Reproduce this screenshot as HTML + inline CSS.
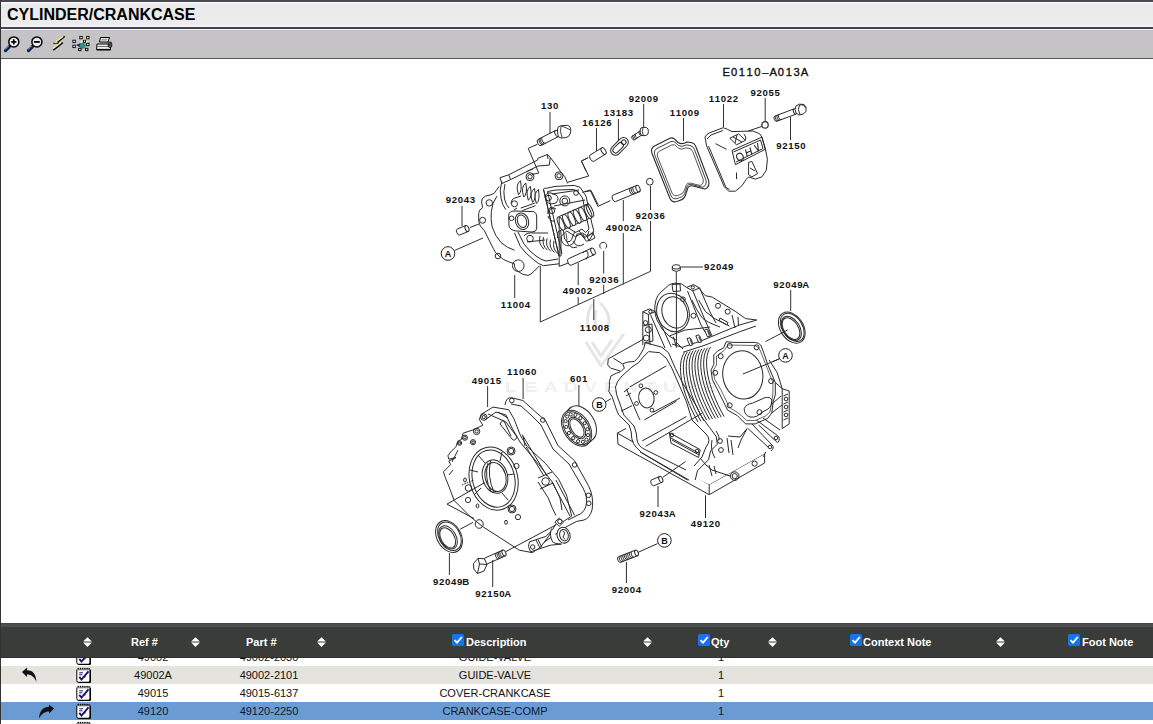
<!DOCTYPE html>
<html><head><meta charset="utf-8">
<style>
*{margin:0;padding:0;box-sizing:border-box}
html,body{width:1153px;height:724px;overflow:hidden;background:#fff;font-family:"Liberation Sans",sans-serif}
#top{position:absolute;left:0;top:0;width:1153px;height:2px;background:#4a4a56}
#lb{position:absolute;left:0;top:0;width:1px;height:724px;background:#333;z-index:5}
#title{position:absolute;left:1px;top:2px;width:1152px;height:25px;background:linear-gradient(#fafafd 0,#fafafd 1px,#ebebeb 2px,#ececee 23px,#f8f8fa 24px)}
#title span{position:absolute;left:6px;top:4px;font-weight:bold;font-size:16px;color:#000;letter-spacing:0}
#l1{position:absolute;left:0;top:27px;width:1153px;height:2px;background:#454550}#l1b{position:absolute;left:1px;top:29px;width:1152px;height:1px;background:#f2f2f6}
#tb{position:absolute;left:1px;top:30px;width:1152px;height:28px;background:#c5c3c5}
#l2{position:absolute;left:0;top:58px;width:1153px;height:1px;background:#555}
#diag{position:absolute;left:0;top:59px;width:1153px;height:564px}
#hdr{position:absolute;left:0;top:623px;width:1153px;height:35px;background:#3a3c39;border-bottom:1px solid #2f302e}
#hdr .tl{position:absolute;left:0;top:0;width:1153px;height:1px;background:#444}
#hdr .tl2{position:absolute;left:0;top:1px;width:1153px;height:3px;background:#4e4e50}
.h{position:absolute;top:12px;color:#fff;font-weight:bold;font-size:11px;line-height:14px;white-space:nowrap}
.sa{position:absolute;top:14.3px;width:9px;height:10px}
.cb{position:absolute;top:11px;width:12px;height:12px;background:#1a73e8;border-radius:2px}
.row{position:absolute;left:1px;width:1152px;height:18px;font-size:11px;color:#111;line-height:18px}
.row span{position:absolute;top:0;white-space:nowrap}
.c1{left:0;width:305px;text-align:center}

.ni{position:absolute;left:74.5px;top:1px;width:15px;height:16px}
.rf{left:52px;width:200px;text-align:center}
.pt{left:168px;width:200px;text-align:center}
.ds{left:394px;width:200px;text-align:center}
.qt{left:620px;width:200px;text-align:center}
</style></head><body>
<div id="top"></div>
<div id="title"><span>CYLINDER/CRANKCASE</span></div>
<div id="lb"></div>
<div id="l1"></div><div id="l1b"></div>
<div id="tb"><svg width="1152" height="29" style="position:absolute;left:0;top:0">
<defs>
<linearGradient id="hg" x1="0" y1="0" x2="1" y2="1"><stop offset="0" stop-color="#a8c4e8"/><stop offset="1" stop-color="#0d2350"/></linearGradient>
</defs>
<g transform="translate(-1,-30)">
<!-- zoom in -->
<line x1="9.5" y1="46.5" x2="5.5" y2="50.5" stroke="#0f2452" stroke-width="3.2" stroke-linecap="round"/>
<line x1="8.5" y1="46" x2="5" y2="49.5" stroke="#9fbde6" stroke-width="1"/>
<circle cx="13.8" cy="41.9" r="5" fill="#f4f4f6" stroke="#000" stroke-width="1.5"/>
<path d="M11.2 41.9h5.2M13.8 39.3v5.2" stroke="#000" stroke-width="1.8"/>
<!-- zoom out -->
<line x1="32.5" y1="46.5" x2="28.5" y2="50.5" stroke="#0f2452" stroke-width="3.2" stroke-linecap="round"/>
<line x1="31.5" y1="46" x2="28" y2="49.5" stroke="#9fbde6" stroke-width="1"/>
<circle cx="36.9" cy="41.9" r="5" fill="#ececf0" stroke="#000" stroke-width="1.5"/>
<path d="M34 41.9h5.8" stroke="#000" stroke-width="1.8"/>
<!-- lightning -->
<path d="M57.5 42 L64.7 36.3" stroke="#000" stroke-width="1.6"/>
<path d="M56.3 41.5 L63 36.5" stroke="#f7f48c" stroke-width="1.4"/>
<path d="M53.3 43.3 L58.5 43.3 L57.5 42" stroke="#000" stroke-width="1.1" fill="none"/><path d="M54.5 42.6 L57.5 42.6" stroke="#f7f48c" stroke-width="0.8"/>
<path d="M53.3 50.2 L62.8 42.7" stroke="#000" stroke-width="1.6"/>
<path d="M53 48.5 L61 42.5" stroke="#f7f48c" stroke-width="1.3"/>
<!-- select -->
<path d="M81 43 Q84 36.5 87 43" fill="none" stroke="#f2ecb8" stroke-width="2"/>
<path d="M76 45 L81 43 L80.5 47.5 Z" fill="#1a2a5a"/>
<circle cx="82.7" cy="45.8" r="3" fill="#2f8f8a"/>
<g fill="#fff" stroke="#000" stroke-width="0.9">
<rect x="79.8" y="36.4" width="2.4" height="2.4"/><rect x="86.6" y="36.4" width="2.4" height="2.4"/>
<rect x="72.9" y="40.2" width="2.4" height="2.4"/><rect x="72.9" y="45.2" width="2.4" height="2.4"/>
<rect x="78.6" y="48.3" width="2.4" height="2.4"/><rect x="85.5" y="48.3" width="2.4" height="2.4"/>
<rect x="86.6" y="43.3" width="2.4" height="2.4"/><rect x="83.3" y="40.2" width="2.2" height="2.2"/>
</g>
<!-- printer -->
<path d="M99.5 42 L100.5 37.5 L109.5 37.5 L108 42 Z" fill="#f6f6f6" stroke="#000" stroke-width="1"/>
<path d="M101.5 39.3h6M101 41h6" stroke="#777" stroke-width="0.8"/>
<path d="M97 44 L109 44 L110.5 46 L110.5 49.8 L96.6 49.8 Z" fill="#ededed" stroke="#000" stroke-width="1"/>
<path d="M97 49.6h13.5" stroke="#000" stroke-width="1.4"/>
<path d="M97.5 46.5h11" stroke="#555" stroke-width="0.8"/>
<ellipse cx="110" cy="44.8" rx="2" ry="3" fill="#4a4a4a" stroke="#000" stroke-width="0.6"/>
</g></svg></div>
<div id="l2"></div>
<svg id="dg" width="1153" height="724" style="position:absolute;left:0;top:0">
<g fill="#fff" stroke="#222" stroke-width="1">
<circle cx="448" cy="253.5" r="6.8"/>
<circle cx="785.5" cy="355.4" r="6.8"/>
<circle cx="599.2" cy="404.5" r="6.8"/>
<circle cx="664.4" cy="540.4" r="6.8"/>
</g>
<g font-family="Liberation Sans" font-weight="bold" font-size="9" fill="#111" text-anchor="middle">
<text x="448" y="256.8">A</text>
<text x="785.5" y="358.7">A</text>
<text x="599.4" y="407.8">B</text>
<text x="664.6" y="543.7">B</text>
</g>

<!-- leader lines -->
<g fill="none" stroke="#333" stroke-width="1">
<path d="M550 112V134"/>
<path d="M596.5 128V151"/>
<path d="M618.4 119V141"/>
<path d="M643.7 104V128"/>
<path d="M683.5 118V141"/>
<path d="M723.5 104V127"/>
<path d="M765.2 98V121"/>
<path d="M790.5 117V140"/>
<path d="M462 206V226"/>
<path d="M454.5 250.5L483 238"/>
<path d="M514.7 275V298"/>
<path d="M623.3 200V221M623.3 233V284.5"/>
<path d="M650.5 186V210M650.5 221V271"/>
<path d="M603.7 251V273.6M603.7 285V294"/>
<path d="M578.2 263V285M578.2 297V304"/>
<path d="M540.3 266V322L650.8 271.2"/>
<path d="M593.8 299V320"/>
<path d="M681 267H703"/>
<path d="M676.3 272V346"/>
<path d="M790.7 290V311"/>
<path d="M787.8 329.8L765.5 341.6"/>
<path d="M779 359L743 374"/>
<path d="M523.1 378V399"/>
<path d="M487.6 386V407"/>
<path d="M578.9 385V408"/>
<path d="M449.4 553V575"/>
<path d="M492.7 560V587"/>
<path d="M605.5 402L611 398.7"/>
</g>
<g fill="none" stroke="#2a2a2a" stroke-width="1" stroke-linejoin="round">
<g ><path d="M541.1 145.5 L558.6 136.5 M537.9 139.5 L555.4 130.5"/><ellipse cx="557.0" cy="133.5" rx="3.4" ry="1.9" transform="rotate(62.8 557.0 133.5)"/><path d="M541.1 145.5 A3.4 1.9 62.8 0 1 537.9 139.5"/></g>
<path d="M542.6 144.7 A3.4 1.9 62.8 0 1 539.5 138.7"/><path d="M544.1 144.0 A3.4 1.9 62.8 0 1 541.0 137.9"/><path d="M545.6 143.2 A3.4 1.9 62.8 0 1 542.5 137.1"/>
<path d="M557.5 130 Q557 126.5 560.5 125.8 L567.5 125.3 Q570.8 126 570.8 129.5 L570.5 133 Q569.5 136.8 566 137.6 L561 138 Q558 137.5 557.8 134.5 Z" fill="#fff"/>
<path d="M561 126 Q559.5 131.5 562 137.5 M561.5 126 Q567 128 570.5 130" stroke-width="0.9"/>
<path d="M537.5 144.2 L528.2 148.4"/>
<g ><path d="M593.7 161.4 L605.5 154.1 M589.9 155.2 L601.7 147.9"/><ellipse cx="603.6" cy="151.0" rx="3.7" ry="2.0" transform="rotate(58.3 603.6 151.0)"/><path d="M593.7 161.4 A3.7 2.0 58.3 0 1 589.9 155.2"/></g>
<path d="M587.6 158 L581.4 161.1 L586 171"/>
<g transform="rotate(-45 619.5 146.4)"><rect x="609" y="141.6" width="21" height="9.6" rx="4.8"/><rect x="611.3" y="143.6" width="12.5" height="5.6" rx="2.8"/><circle cx="625.5" cy="146.4" r="2.3"/></g>
<g ><path d="M634.2 140.0 L641.7 135.1 M631.8 136.4 L639.3 131.5"/><ellipse cx="640.5" cy="133.3" rx="2.2" ry="1.2" transform="rotate(56.8 640.5 133.3)"/><path d="M634.2 140.0 A2.2 1.2 56.8 0 1 631.8 136.4"/></g>
<path d="M635.5 139.2 A2.2 1.2 56.8 0 1 633.1 135.5"/><path d="M636.7 138.4 A2.2 1.2 56.8 0 1 634.3 134.7"/><path d="M638.0 137.6 A2.2 1.2 56.8 0 1 635.6 133.9"/>
<path d="M640.2 130 Q640 127.5 643 127.3 L646.5 127.5 Q648.6 128.5 648.4 131.5 L648 134 Q646.8 135.8 644 135.7 L642 135.5 Q640.3 134.5 640.2 132.5 Z" fill="#fff"/><path d="M643 127.5 Q641.5 131.5 643.3 135.6" stroke-width="0.9"/>
<path d="M655.5 145.4 L669.8 138.3 Q673 137 675.5 140 L678 142.5 Q682 145 687 142 L691 142.5 Q694.5 143 696 147 L708.5 180.2 Q710.5 187 705 189 L693 186 Q688.5 185 687.5 189 L686 193.5 Q684.5 199.5 679.5 200.5 L677 201.5 Q672 203 670 198.5 L652 153.5 Q650 147.5 655.5 145.4 Z" stroke-width="1.1"/>
<path d="M655.5 145.4 L669.8 138.3 Q673 137 675.5 140 L678 142.5 Q682 145 687 142 L691 142.5 Q694.5 143 696 147 L708.5 180.2 Q710.5 187 705 189 L693 186 Q688.5 185 687.5 189 L686 193.5 Q684.5 199.5 679.5 200.5 L677 201.5 Q672 203 670 198.5 L652 153.5 Q650 147.5 655.5 145.4 Z" transform="translate(680.5 171.5) scale(0.9) translate(-680.5 -171.5)"/>
<path d="M655.5 145.4 L669.8 138.3 Q673 137 675.5 140 L678 142.5 Q682 145 687 142 L691 142.5 Q694.5 143 696 147 L708.5 180.2 Q710.5 187 705 189 L693 186 Q688.5 185 687.5 189 L686 193.5 Q684.5 199.5 679.5 200.5 L677 201.5 Q672 203 670 198.5 L652 153.5 Q650 147.5 655.5 145.4 Z" transform="translate(680.5 171.5) scale(0.8) translate(-680.5 -171.5)"/>
<path d="M705 137.1 Q706.5 134 709.9 132.7 L723.2 127.7 L727.6 129.4 L732 131.6 L753 131 L759.7 133.8 L761.9 137.1 L765.2 148.1 L767.4 159.2 L766.3 170.2 L761.9 176.9 L755.2 179.1 L748.6 176.9 L746.4 179.1 L742 185.7 L735.4 191.2 L728.7 191.2 L724.3 186.8 L706.6 145.9 Z" fill="#fff"/>
<path d="M707 139 L711 135 L723 130.5 M708.5 146 L726 187.5 L729.5 189.5"/>
<path d="M732 150.4 L761.9 137.1 L765.2 149.3 L735.4 164.7 Z M733.5 152 L760.5 140 L763 148.5 L736 162"/>
<path d="M729.8 138.2 L738.7 133.8 L745.3 140.4 L736.5 144.8 Z M733 137 L742 142 M737 135 L735 143"/>
<path d="M745.3 140.4 Q747 137 744 134"/>
<path d="M748.6 162.5 L751.9 161.4 L757.5 173.6 L751.9 176.9 L748.6 174.7 Z M750 168 L755 171"/>
<path d="M715.5 143.7 L726.5 149.3 M736.5 172.5 V179.1"/>
<g stroke-width="1.1"><ellipse cx="740" cy="157" rx="3.2" ry="3.8" transform="rotate(-25 740 157)"/><path d="M745.5 149.5 L747.3 156.5 M746.2 153 L751 150.8 M750 147.5 L751.8 154.5 M754 145 L758.5 151 L757.5 143"/></g>
<circle cx="765" cy="124.9" r="3.2" stroke-width="1.2"/>
<path d="M748.3 131 L761.5 126.5"/>
<g ><path d="M776.5 121.4 L796.0 114.1 M774.5 116.2 L794.0 108.9"/><ellipse cx="795.0" cy="111.5" rx="2.8" ry="1.5" transform="rotate(69.5 795.0 111.5)"/><path d="M776.5 121.4 A2.8 1.5 69.5 0 1 774.5 116.2"/></g>
<path d="M778.0 120.9 A2.8 1.5 69.5 0 1 776.0 115.6"/><path d="M779.5 120.3 A2.8 1.5 69.5 0 1 777.5 115.1"/><path d="M781.0 119.7 A2.8 1.5 69.5 0 1 779.0 114.5"/>
<path d="M796 106 Q799 103 804 104.5 Q807 107 806 111.5 Q803.5 115 799 115 Q795 113.5 795 109.5 Z" fill="#fff"/>
<path d="M799.5 105 Q797 109.5 800 114.5 M799.5 105 Q804 104 805.5 108"/>
</g><g fill="none" stroke="#2a2a2a" stroke-width="1" stroke-linejoin="round">
<path d="M499 186.4 L496.1 190.7 Q495 194 490 195 L485.5 196.1 Q481 198 481.6 201.9 L482.6 207.7 Q478.5 210 478.7 213.5 L478.7 221.2 Q479 226 484.5 230.9 L489.3 240.6 L493.2 248.3 Q495 253 499 256 Q503 260 508.7 261.8 L514.5 263.8 Q514 269 518.3 271.5 Q522 275 528 275.4 Q531 274.5 533.8 271.5 L539.6 265.7" fill="#fff"/>
<circle cx="489.3" cy="202.9" r="3.2"/><circle cx="482.6" cy="220.3" r="3"/><circle cx="498" cy="256" r="2.8"/><circle cx="518.3" cy="265.7" r="5.8"/>
<path d="M497 196 Q492 203 491.3 211.6 Q490.5 220 492.2 227 Q495 236 501 242.5 Q507 248 514.5 250.2"/>
<path d="M500 177.7 L508.7 174.8 L537.7 160 L537.7 158.4 L547.4 154.5 L550.3 157.4 L556 165.1 L564.8 176.7 L567.7 183.5 L580.2 185 L586 196.1 L593.8 230.9 L588 240 L559 262 L543.5 265.7 L533.8 259.9 L520.3 246.4 L512 230 Q503 215 501.9 198 Z" fill="#fff" stroke="none"/>
<path d="M501.9 181.6 Q499 190 501 198 Q502 205 505.8 209.6 M505 184 Q503 192 504.5 199 Q506 205 509 208"/>
<path d="M500 177.7 L508.7 174.8 L510.6 179.6 L501.9 183.5 Z"/>
<path d="M508.7 174.8 L537.7 160 M510.6 179.6 L538 166 L549.3 165.1"/>
<path d="M537.7 160 L537.7 158.4 L547.4 154.5 L550.3 157.4 L549.3 165.1 M547.4 154.5 L548 159"/>
<path d="M550.3 157.4 L556 165.1 L560.9 171.9 L564.8 176.7 L567.7 183.5"/>
<circle cx="530" cy="176.7" r="4"/><circle cx="530" cy="176.7" r="2.2"/><circle cx="559" cy="175.8" r="4"/><circle cx="559" cy="175.8" r="2.2"/>
<circle cx="514.5" cy="203.8" r="3"/><circle cx="511.6" cy="218.3" r="2.3"/><circle cx="530" cy="238.6" r="3.3"/><circle cx="564.8" cy="200.9" r="5"/><circle cx="564.8" cy="200.9" r="2.8"/>
<path d="M520.5 180.7 Q515.0 184.7 518.5 194.7 Q522.5 191.7 520.5 180.7" fill="#fff"/>
<path d="M525.8 183.0 Q520.3 187.0 523.8 197.0 Q527.8 194.0 525.8 183.0" fill="#fff"/>
<path d="M530.4 186.3 Q524.9 190.3 528.4 200.3 Q532.4 197.3 530.4 186.3" fill="#fff"/>
<path d="M534.5 188.3 Q529.0 192.3 532.5 202.3 Q536.5 199.3 534.5 188.3" fill="#fff"/>
<path d="M538.4 189.5 Q532.9 193.5 536.4 203.5 Q540.4 200.5 538.4 189.5" fill="#fff"/>
<path d="M520.7 208.1 L534.8 203.1 M522.3 210.6 L535.6 205.6 M511.2 204 Q511 199 515 198 L521 196 M517 208 L514 210"/>
<path d="M526.5 171.7 L533 169"/>
<path d="M508.7 215.4 Q509 211 514 211 L533.8 211.6 Q537 213 536.7 217 L536.7 229 Q536 232 532 232 L515.4 230.9 Q510 230 509 226 Z"/>
<ellipse cx="522" cy="221.2" rx="6.5" ry="8.5" transform="rotate(-20 522 221.2)"/>
<ellipse cx="522" cy="221.2" rx="4.5" ry="6.5" transform="rotate(-20 522 221.2)"/>
<path d="M514.5 232.8 L520.3 246.4 Q526 254 533.8 259.9 Q538 264 543.5 265.7 L559 263.8 M518 232 L524 244 Q530 252 536 256 Q541 260 546 261 L558 259"/>
<path d="M524 236 Q527 232 534 233 L548 233 M527 242 L545 240"/>
<path d="M543.5 189.3 Q544 187.5 546.4 188.3 L555.1 186.4 L574.4 185.4 L580.2 187.4 L586 196.1 L591.8 223.2 L593.8 230.9 L588 236.7 L582.2 232.8 L575.4 236.7 L566.7 230.9 L560.9 236.7 L561 256 L559 256 Z"/>
<path d="M547.5 191.5 L556 190 L573.5 189.5 L577.5 191 L582.5 198 L587.5 222 L589 229 L585.5 232.5 L582 229 L575.5 232.5 L566.5 226.5 L558 232 L557.5 238"/>
<path d="M543.5 189.3 L559 256 M547.5 191.5 L562 254"/>
<circle cx="548.5" cy="198" r="2.8"/><circle cx="552" cy="211" r="2.6"/><circle cx="576" cy="193" r="2.3"/><path d="M552 194 L579 190 M554 206 L585 200"/>
<path d="M545 197 Q546 192 551 193 L556 195 Q560 198 556 203 L551 204 Q546 203 545 197 Z"/>
<path d="M548 214 Q547 208 552 207 L556 209 M548 216 Q550 222 555 221"/>
<path d="M559.4 216.4 L588.8 203.5 M561.7 230.5 L591.1 217.6"/>
<ellipse cx="561.0" cy="223.5" rx="2.6" ry="7.2" transform="rotate(-24 561.0 223.5)" fill="#fff"/>
<ellipse cx="566.4" cy="221.2" rx="2.6" ry="7.2" transform="rotate(-24 566.4 221.2)" fill="#fff"/>
<ellipse cx="571.8" cy="218.8" rx="2.6" ry="7.2" transform="rotate(-24 571.8 218.8)" fill="#fff"/>
<ellipse cx="577.2" cy="216.4" rx="2.6" ry="7.2" transform="rotate(-24 577.2 216.4)" fill="#fff"/>
<ellipse cx="582.6" cy="214.1" rx="2.6" ry="7.2" transform="rotate(-24 582.6 214.1)" fill="#fff"/>
<ellipse cx="588.0" cy="211.8" rx="2.6" ry="7.2" transform="rotate(-24 588.0 211.8)" fill="#fff"/>
<ellipse cx="590" cy="210.5" rx="2.5" ry="7" transform="rotate(-24 590 210.5)"/>
<path d="M560.6 230.5 L561.7 241.1 Q564 246 568.8 245.8 Q573 245 574.7 241.1 L577 234 Q579.5 233 581.7 235.2 L586.4 241.1 Q590 242 593.5 231.7"/>
<path d="M563.5 231 L564.5 239 Q567 242.5 570 241.5 Q572 240 572.5 237 L575 231 M579 231 L584 237 Q587 238 589 231"/>
<path d="M566 233 L567 240 M583 234 L585 239" stroke-width="0.8"/>
<path d="M585.2 191.8 L591.1 190.6 L598.2 204.7"/>
<path d="M540.0 236.0 Q538.0 244.0 544.0 249.0"/>
<path d="M543.5 237.2 Q541.5 245.2 547.5 250.2"/>
<path d="M547.0 238.4 Q545.0 246.4 551.0 251.4"/>
<path d="M550.5 239.6 Q548.5 247.6 554.5 252.6"/>
<path d="M554.0 240.8 Q552.0 248.8 558.0 253.8"/>
<path d="M566 240 Q570 250 577 247 M573 241 Q577 249 584 244 M587 236 L593 233 L595 238 L589 241 Z"/>
<path d="M528.2 148.4 L538.8 173 L532 174.5"/>
<path d="M588.2 157.6 L581.4 161 L588.7 176 L567.9 182.2"/>
<path d="M610.4 200.6 L597.9 206.4 L590.1 190 L582.4 192.4"/>
<path d="M559.2 216.6 V266.4 L568.4 263"/>
</g>
<g fill="none" stroke="#2a2a2a" stroke-width="1">
<g ><path d="M615.3 201.7 L639.3 191.8 M612.7 195.3 L636.7 185.4"/><ellipse cx="638.0" cy="188.6" rx="3.5" ry="1.9" transform="rotate(67.6 638.0 188.6)"/><path d="M615.3 201.7 A3.5 1.9 67.6 0 1 612.7 195.3"/></g>
<path d="M633.0 194.4 A3.5 1.9 68.2 0 1 630.4 187.9"/><path d="M634.6 193.7 A3.5 1.9 68.2 0 1 632.0 187.2"/><path d="M636.3 193.0 A3.5 1.9 68.2 0 1 633.7 186.5"/>
<g ><path d="M571.3 265.2 L594.5 254.6 M568.3 258.8 L591.5 248.2"/><ellipse cx="593.0" cy="251.4" rx="3.5" ry="1.9" transform="rotate(65.4 593.0 251.4)"/><path d="M571.3 265.2 A3.5 1.9 65.4 0 1 568.3 258.8"/></g>
<path d="M583 253 A3.5 1.9 -65 0 1 586 259.5"/>
<circle cx="649.8" cy="181.7" r="3.4"/>
<path d="M601 248.5 A3.5 3.5 0 1 1 605.5 248.5"/>
<g ><path d="M459.7 235.0 L468.2 231.5 M457.3 229.0 L465.8 225.5"/><ellipse cx="467.0" cy="228.5" rx="3.2" ry="1.8" transform="rotate(67.6 467.0 228.5)"/><path d="M459.7 235.0 A3.2 1.8 67.6 0 1 457.3 229.0"/></g>
<path d="M470 227.5 L479 224"/>
</g><g fill="none" stroke="#2a2a2a" stroke-width="1" stroke-linejoin="round">
<path d="M617.3 433.1 L709.2 484.5 L764.6 453.7 L764.6 463 L709.2 494.7 L618 444.2 Z M709.2 484.5 V494.7" fill="#fff"/>
<path d="M617.3 433.1 L626 428.5 M764.6 453.7 L760 450.5"/>
<circle cx="754.6" cy="463.6" r="2.6"/>
<circle cx="734.7" cy="476.1" r="4.3"/><circle cx="734.7" cy="476.1" r="2.6"/>
<path d="M608.3 360.7 L637.3 342.8 L643 312.3 L649.9 308.6 L656.1 298.6 L669.8 284.3 L682.2 283.7 L693.4 283.7 L699.7 287.4 L735.9 309.8 L755.8 319.7 L777.3 372.9 L788.3 389.9 L788.3 426 L764.6 453.7 L709.2 484.5 L641.4 452.5 L635.9 447 L631.8 438.7 L629 424.9 L613.8 400 L608.3 387 Z" fill="#fff" stroke="none"/>
<path d="M645.3 342.7 L661.9 347.2 L668.5 352.7 L675.5 368.7 L682.1 382 L688.7 393 L696.5 406.3 L702 417.3 Q710 428 716.2 436.5 L717.3 444.2 L710.7 450.8 L708.5 459.7 L701.9 466.3 L697.5 470.7 L695.2 480"/>
<path d="M645.3 342.7 L643.6 348.8 L638.7 357.1 L634.3 361.5 L627.6 362.1 L622.7 363.7 L624.3 368.1 L621 371.5 L616.6 373.1 L611 375.9 L609.4 381.4 L609.4 386.9 L608.8 391.4 L612.2 396.9 L614.4 403.5 L616.6 410.1 L618.8 415 L629 424.9 Q632 432 631.8 438.7 Q633 444 635.9 447 L641.4 452.5 L689.2 480.2"/>
<path d="M648.6 351.6 L659.7 352.7 L666.3 358.2 L671.8 368.1 L686.5 401.9 L692 420 L706 434 Q712 440 706 447 L702 457 L694 466 M648.6 351.6 L643.1 357.1 L638.7 362.6 L632 367 L622.1 375.9 L617.7 381.4 L615.5 386.9 L616.6 394.7 L621 406.8 L623.8 415 L634 426 Q637 433 637 440 Q638 446 644 449 L686 470"/>
<path d="M608.3 358.8 L643.1 339.4 M608.3 358.8 L607.7 364.8 L610.5 368.1 L619.9 370.9 M613.3 358.2 L622.1 363.7"/>
<path d="M629.8 386.9 L666.3 365.9 M626.5 389.1 L637.6 415 L640 420 M653 412.3 L680 398 M621 411.2 L632 405.7"/>
<path d="M624 392 L629 388 M626 396 L631 393"/>
<ellipse cx="646.4" cy="398" rx="7.7" ry="10" transform="rotate(-10 646.4 398)"/>
<circle cx="640.9" cy="385.8" r="1.9"/>
<circle cx="655.8" cy="392.5" r="1.9"/>
<circle cx="636.5" cy="403.5" r="1.9"/>
<circle cx="651.9" cy="410.1" r="1.9"/>
<path d="M644.4 419.9 L676.5 401.1 M642.2 440.9 L686.4 416.6 M645.5 446.4 L701.9 413.3 M640 451.9 L687.5 480"/>
<path d="M669.3 432.6 L700.2 449.7 L698.6 457.5 L671 443.1 Z M670 437.5 L699.5 453.5 M672 440 L699 455" fill="#fff"/>
<circle cx="672" cy="435" r="1.8"/><circle cx="697" cy="451" r="1.8"/>
<g ><path d="M653.7 485.8 L662.0 482.3 M651.3 480.0 L659.6 476.5"/><ellipse cx="660.8" cy="479.4" rx="3.2" ry="1.8" transform="rotate(67.1 660.8 479.4)"/><path d="M653.7 485.8 A3.2 1.8 67.1 0 1 651.3 480.0"/></g>
<path d="M662.8 477.3 L685.6 461.5 M658 486 V507"/>
<path d="M705.5 495.3 V518"/>
<path d="M656 299.9 Q657.5 295 660.8 292.2 L668.5 285.3 Q671 283.5 674.7 283.2 L681.7 283.9 L686.5 287.4" fill="#fff"/>
<path d="M656 299.9 Q653 310 657 320 Q661 330 669 336 L676 340"/>
<ellipse cx="673" cy="312.4" rx="16" ry="19.5" transform="rotate(-18 673 312.4)"/>
<ellipse cx="674.7" cy="312.4" rx="12.5" ry="16" transform="rotate(-18 674.7 312.4)"/>
<path d="M672 284.5 L680 284 L680.5 291 L673 291.5 Z"/><circle cx="683" cy="299.2" r="2.3"/><circle cx="693.5" cy="315.8" r="2.5"/>
<path d="M642.8 311.7 L649.7 308.9 L655.3 311.7 L648.3 314.4 Z M642.8 311.7 V345 M648.3 314.4 L650 345 M655.3 311.7 L671.3 347.1 M650.4 314.5 L665 348" fill="#fff"/>
<circle cx="650.4" cy="311.7" r="1.6"/>
<circle cx="645.6" cy="322.8" r="2.2"/><circle cx="648.3" cy="329.7" r="3"/><circle cx="646.3" cy="338" r="3"/><path d="M643 326 L652 324 L653 341 L644 343"/>
<path d="M686.5 287.4 L693.5 284.6 L699.7 288 L692.8 290.8 Z" fill="#fff"/><circle cx="692.8" cy="287.4" r="1.6"/>
<path d="M687.5 291 L701 325 L705 332 M692.8 290.8 L705 320 L712 336 M699.7 288 L710 312 L716 323"/>
<path d="M699.7 289.4 L705.3 295.7 L712.2 297.1 L735.8 311.7 L745.6 318.6 L756.7 320"/>
<path d="M691.9 300 L696.8 309.7 L702.6 318.4 L708.4 322.2 L720 327.1 M698.7 300 L705.5 311.6 L714.2 318.4 L729.6 326.1"/>
<circle cx="718" cy="305.8" r="2.5"/><circle cx="727.7" cy="311.6" r="2.5"/><path d="M720 318 L728 322.5 L727 325 L719 320.5 Z"/><path d="M732 315 L735 328 M738 317 L738.5 326"/>
<path d="M672 344 L682.2 347.4 L702 340.5 L739.3 325.1 L756.7 320 M683.2 352.2 L704 345.5 L739.3 331.9 L756 326"/>
<path d="M669.7 335.8 L685.2 330 L702.5 328 L710 327"/>
<path d="M687.0 338.7 L690.0 337.7 L693.0 344.7 L690.0 345.7 Z" fill="#fff"/><path d="M690.5 339.2 L692.5 344.2" stroke-width="2.2" stroke="#555"/>
<path d="M695.8 335.8 L698.8 334.8 L701.8 341.8 L698.8 342.8 Z" fill="#fff"/><path d="M699.3 336.3 L701.3 341.3" stroke-width="2.2" stroke="#555"/>
<path d="M704.5 330.0 L707.5 329.0 L710.5 336.0 L707.5 337.0 Z" fill="#fff"/><path d="M708.0 330.5 L710.0 335.5" stroke-width="2.2" stroke="#555"/>
<path d="M676 342 L683 349 M673.3 336.7 L676 346"/>
<path d="M684.5 352.5 C676.0 364.0 681.0 392.0 698.0 422.0"/>
<path d="M687.4 351.9 C678.9 363.4 683.9 391.4 700.9 421.4"/>
<path d="M690.3 351.3 C681.8 362.8 686.8 390.8 703.8 420.8"/>
<path d="M693.2 350.7 C684.7 362.2 689.7 390.2 706.7 420.2"/>
<path d="M696.1 350.1 C687.6 361.6 692.6 389.6 709.6 419.6"/>
<path d="M699.0 349.5 C690.5 361.0 695.5 389.0 712.5 419.0"/>
<path d="M701.9 348.9 C693.4 360.4 698.4 388.4 715.4 418.4"/>
<path d="M704.8 348.3 C696.3 359.8 701.3 387.8 718.3 417.8"/>
<path d="M707.7 347.7 C699.2 359.2 704.2 387.2 721.2 417.2"/>
<path d="M710.6 347.1 C702.1 358.6 707.1 386.6 724.1 416.6"/>
<path d="M726.2 341.7 L733.1 342.4 L755.2 342.4 Q759 343 760.8 345.2 L763.5 352.1 L767.7 364.5 L771.8 374.2 L775.3 382.5 L775.3 394.9 L773.2 401.8 L771.8 412.9 L767.7 418.4 L755.2 423.9 L745.6 423.9 L737.3 415.6 L727.6 410.1 L724.9 404.6 L718 390.8 L712.4 379.7 L711 370.1 L713.8 364.5 L713.8 354.9 L718 350.7 L723.5 348 Z" fill="#fff"/>
<path d="M728 345 L755 345.5 Q758.5 346.5 760 350 L769.5 374 L773 383 L772.8 395 L770 412 L765.5 416 L755 420.5 L746.5 420.5 L739 413.5 L729.5 407.5 L721 390 L714.5 379 L713.5 370 L716.5 365 L716.5 356 L724 350.5 Z" stroke-width="0.7"/>
<ellipse cx="742.8" cy="374.9" rx="20" ry="24.2" transform="rotate(-8 742.8 374.9)"/>
<circle cx="729.7" cy="345.9" r="2.5"/>
<circle cx="756.6" cy="347.3" r="2.5"/>
<circle cx="720.7" cy="356.2" r="2.5"/>
<circle cx="715.2" cy="372.8" r="2.5"/>
<circle cx="771.1" cy="381.1" r="2.5"/>
<circle cx="729.7" cy="405.3" r="2.5"/>
<circle cx="759.4" cy="412.2" r="2.5"/>
<path d="M744.2 408.7 Q746 404 752.5 403.2 L764.9 397.7 Q771 396.5 771.8 400.4 Q772 406 768 409 L760.8 412.9 Q757 418 750 417 Q744 415 744.2 408.7 Z"/>
<path d="M769.2 360 L777.3 372.9 L782.2 388.7 L789.2 391 L789.2 423.9 L782.2 428.6 M775.3 382.5 L782.2 388.7 M782.2 388.7 V428.6"/>
<path d="M783.5 396 L788 394 M783.5 404 L788 402 M783.5 412 L788 410 M783.5 420 L788 418"/>
<circle cx="786" cy="399" r="1.8"/><circle cx="786" cy="407" r="1.8"/><circle cx="786" cy="415" r="1.8"/>
<path d="M771.8 412.9 L782 405 M772 404 L781 396"/>
<path d="M756.3 420 L777.5 435.6 M758.7 425 L777.5 442.7 M763 418 L780 430 M752 424 L772 445 M748 428.6 L768 447 M777.5 435.6 Q781 438 778 442.5 M772 445 Q775 448 771 451"/>
<circle cx="776" cy="438" r="1.8"/><circle cx="770" cy="447" r="1.8"/>
<path d="M747 428.6 L741 440 L738 448 M763.4 456.8 L765.7 452 M728 436 L740 437 L747 428.6"/>
<path d="M727 438 L729 453 M731 440 L733 455 M716 431 Q720 437 718.8 440.3 M712 440 Q710 450 715 458"/>
<circle cx="720" cy="441" r="2.4"/><circle cx="721" cy="450" r="2.4"/>
<path d="M700 458 Q706 466 712 470 L730 476 M709 465 L712 476 M714 466 L716 474"/>
<path d="M779 359L743 374"/>
<path d="M676.4 283 V347.8"/>
<ellipse cx="676.3" cy="266.9" rx="4" ry="2.2" fill="#fff"/><path d="M672.3 266.9 V270 Q676.3 273 680.3 270 V266.9"/>
<g transform="rotate(-33 791.8 327.6)"><ellipse cx="791.8" cy="327.6" rx="11.5" ry="17"/><ellipse cx="792.3" cy="327.6" rx="10" ry="15.5"/><ellipse cx="791" cy="328" rx="8.3" ry="13.3"/><ellipse cx="790.6" cy="328" rx="7.2" ry="12"/></g>
<g ><path d="M620.6 562.3 L637.6 555.8 M618.4 556.7 L635.4 550.2"/><ellipse cx="636.5" cy="553.0" rx="3.0" ry="1.7" transform="rotate(69.1 636.5 553.0)"/><path d="M620.6 562.3 A3.0 1.7 69.1 0 1 618.4 556.7"/></g>
<path d="M622.3 561.7 A3.0 1.7 69.1 0 1 620.1 556.1"/><path d="M623.9 561.0 A3.0 1.7 69.1 0 1 621.8 555.4"/><path d="M625.6 560.4 A3.0 1.7 69.1 0 1 623.5 554.8"/><path d="M627.3 559.7 A3.0 1.7 69.1 0 1 625.2 554.1"/><path d="M629.0 559.1 A3.0 1.7 69.1 0 1 626.8 553.5"/><path d="M630.7 558.4 A3.0 1.7 69.1 0 1 628.5 552.8"/><path d="M632.3 557.8 A3.0 1.7 69.1 0 1 630.2 552.2"/><path d="M634.0 557.2 A3.0 1.7 69.1 0 1 631.9 551.6"/>
<path d="M638 552.4 L657.5 543.6 M626.4 562 V583"/>
</g><g fill="none" stroke="#2a2a2a" stroke-width="1" stroke-linejoin="round">
<path d="M505 405 Q506 397 511.8 397.8 L522.9 400.5 L534.5 411 L545.6 420.7 L558 445.6 L574.6 460.8 L588.4 485.6 Q594 496 592.2 509.3 Q590 518 584 520 L576.7 521.4 L566 527 L540 545" fill="#fff"/>
<path d="M511 404 L521 406 L531 415 L541 425 L553 449 L569 464 L583 488 Q588 497 586 506 Q584 513 578 515 L568 520"/>
<circle cx="511.8" cy="400.5" r="2.3"/>
<circle cx="542.8" cy="420.0" r="2.3"/>
<circle cx="574.6" cy="464.9" r="2.3"/>
<circle cx="588.4" cy="495.3" r="2.3"/>
<circle cx="588.8" cy="503.3" r="2.3"/>
<path d="M481.1 414.4 L493 407.1 L508.7 409.7 L514 418.9 L520.6 435.9 L527.1 446.4 L545.5 463.5 L558.6 479.2 L566.5 495 L569.1 505.5 L571.7 516 L563.9 521.2 L556 523.8 L548.1 537 L540.2 547.5 L532.4 552.7 L519.2 550.1 L482.5 526.5 L470.3 516.7 L461.3 507.7 L454.2 500.5 L448.8 486.2 L445.2 477.2 L443.4 471.8 L450.6 464.6 L448.8 461 L456 457.5 L448.8 459.2 L447.9 455.7 L450.6 452.1 L456 446.7 L457.7 441.3 L461.3 439.5 L463.1 433.2 L473.9 429.6 L482.9 425.1 L479.3 419.7 Z" fill="#fff"/>
<path d="M485 420 L496 412 L506 415 L512 428 L520 442 L540 466 L553 483 L560 498 L562 510 M458 450 L452 462 M449 475 L453 470"/>
<path d="M488 414 L504 421 L511 436 M498 412 L508 418"/>
<circle cx="483.8" cy="417.1" r="3.2"/><circle cx="483.8" cy="417.1" r="1.6"/>
<circle cx="476.6" cy="431.4" r="3.2"/><circle cx="476.6" cy="431.4" r="1.6"/>
<circle cx="464.9" cy="437.7" r="2.6"/><circle cx="464.9" cy="437.7" r="1.3"/>
<circle cx="473.0" cy="442.2" r="2.6"/><circle cx="473.0" cy="442.2" r="1.3"/>
<circle cx="459.5" cy="443.1" r="2.2"/><circle cx="459.5" cy="443.1" r="1.1"/>
<path d="M500 424 L512 439 Q515 442 517 437 L506 422 Q502 419 500 424 Z"/>
<path d="M522.1 434.5 L547 476 M526.2 447 L544 476 M523 436 L525 446"/>
<circle cx="545.6" cy="481.5" r="3.8"/><path d="M538 478 L552 472 M540 489 L553 483"/>
<ellipse cx="493.6" cy="478.6" rx="24" ry="32" transform="rotate(-15 493.6 478.6)"/>
<ellipse cx="493.6" cy="478.6" rx="21" ry="29" transform="rotate(-15 493.6 478.6)"/>
<ellipse cx="495" cy="476.6" rx="12.5" ry="17" transform="rotate(-15 495 476.6)"/>
<ellipse cx="495.5" cy="477" rx="10.3" ry="14.8" transform="rotate(-15 495.5 477)"/>
<path d="M488 463 Q484 477 491 492 M490.5 461 Q487 477 494 492"/>
<path d="M478 455 L485 463 M502 452 L500 461 M514 474 L507 475 M508 500 L502 493 M474 495 L481 488 M470 470 L478 472"/>
<circle cx="511.1" cy="451.0" r="2.6"/>
<circle cx="516.5" cy="466.0" r="2.6"/>
<circle cx="468.0" cy="500.0" r="2.6"/>
<circle cx="512.0" cy="509.0" r="2.6"/>
<circle cx="518.0" cy="517.1" r="2.6"/>
<circle cx="511.1" cy="451" r="4"/><circle cx="512" cy="509" r="4"/>
<ellipse cx="477.5" cy="505.9" rx="1.4" ry="2"/><ellipse cx="506" cy="522.3" rx="1.4" ry="2"/><ellipse cx="465" cy="480" rx="1.4" ry="2"/>
<path d="M554.8 522 L559.2 518.1 L563.6 522 L559.2 526.4 Z" fill="#fff"/><circle cx="559.8" cy="521.5" r="2.2"/>
<path d="M529.4 541.9 L545.9 536.4 L551.5 530.8 M530.5 551.8 L550.4 545.2 L561.4 544.1 M551.5 528.6 Q549 535 552.6 541.9 Q555 544 561.4 544.1" fill="#fff"/>
<path d="M529.4 541.9 Q527 546 530.5 551.8 M536 540 L540 548 M538 539.5 L542 547.5"/>
<circle cx="532.7" cy="547" r="2.2"/>
<ellipse cx="563.6" cy="535.2" rx="6.5" ry="8" transform="rotate(-15 563.6 535.2)" fill="#fff"/><ellipse cx="564" cy="535.2" rx="4.3" ry="5.8" transform="rotate(-15 564 535.2)"/><path d="M562.5 531 Q566 532 564 535 Q561.5 537 565 539.5"/>
<path d="M555.9 480 L574.7 515.4 M552 482 L570 516 M538 482 L548.1 497.7 L552.6 508.7 L555.9 515.4"/>
<ellipse cx="479.2" cy="524" rx="4" ry="4.3"/>
<path d="M484.7 482.6 L447 504.1 L473.9 518.5"/><circle cx="468.5" cy="488" r="3.3"/><path d="M462 485 L474 480" stroke-dasharray="1.5 1"/>
<path d="M460.2 529.2 L473.1 522.3"/>
<g transform="rotate(-30 449 536.5)"><ellipse cx="449" cy="536.5" rx="12" ry="17"/><ellipse cx="449.5" cy="536.5" rx="10.5" ry="15.3"/><ellipse cx="447.7" cy="536.8" rx="8" ry="12.5"/><ellipse cx="447.2" cy="537" rx="6.6" ry="11"/></g>
<g ><path d="M487.3 563.9 L505.3 555.9 M484.7 558.1 L502.7 550.1"/><ellipse cx="504.0" cy="553.0" rx="3.2" ry="1.8" transform="rotate(66.0 504.0 553.0)"/><path d="M487.3 563.9 A3.2 1.8 66.0 0 1 484.7 558.1"/></g>
<path d="M498.8 558.9 A3.2 1.8 65.8 0 1 496.1 553.0"/><path d="M500.2 558.2 A3.2 1.8 65.8 0 1 497.6 552.4"/><path d="M501.7 557.5 A3.2 1.8 65.8 0 1 499.1 551.7"/><path d="M503.1 556.9 A3.2 1.8 65.8 0 1 500.5 551.1"/>
<path d="M473.5 563.5 L478 558.3 L484.5 558.8 L487 564.5 L484 571 L477.5 573.5 L473.8 569 Z" fill="#fff"/><path d="M478 558.3 L479.5 564 L487 564.5 M479.5 564 L477.5 573.5"/>
<path d="M505.9 551.6 L556 524.9"/>
<g transform="rotate(-32 576.6 428.2)"><ellipse cx="583" cy="427" rx="13" ry="19.5" fill="#fff"/><ellipse cx="576.6" cy="428.2" rx="13" ry="19.5" fill="#fff"/><ellipse cx="576.6" cy="428.2" rx="11.5" ry="18"/><ellipse cx="577" cy="428.2" rx="7" ry="12"/><ellipse cx="577" cy="428.2" rx="5.5" ry="10.3"/><path d="M576.6 408.7 L583 407.5 M576.6 447.7 L583 446.5"/></g>
<circle cx="584.7" cy="423.2" r="1.6"/>
<circle cx="587.4" cy="429.2" r="1.6"/>
<circle cx="588.0" cy="435.1" r="1.6"/>
<circle cx="586.4" cy="439.6" r="1.6"/>
<circle cx="582.9" cy="441.8" r="1.6"/>
<circle cx="578.1" cy="441.2" r="1.6"/>
<circle cx="573.2" cy="438.1" r="1.6"/>
<circle cx="568.9" cy="433.0" r="1.6"/>
<circle cx="566.2" cy="426.9" r="1.6"/>
<circle cx="565.6" cy="421.1" r="1.6"/>
<circle cx="567.2" cy="416.6" r="1.6"/>
<circle cx="570.7" cy="414.4" r="1.6"/>
<circle cx="575.4" cy="414.9" r="1.6"/>
<circle cx="580.4" cy="418.1" r="1.6"/>
</g><g id="wm" fill="none" stroke="#000" stroke-opacity="0.1" stroke-width="3" stroke-linejoin="round">
<path d="M592 304 Q584 318 590 332 M600 303 Q614 316 606 333 M596 310 Q593 322 598 332"/>
<path d="M585.8 341.7 L601 366 L623.8 334 M592 342 L601 356 L612 340"/>
</g>
<text transform="scale(1.3,1)" x="393.1 408.4 423.7 439.0 454.3 469.6 484.9 500.2 515.5 530.8 546.2" y="392.5" text-anchor="middle" font-family="Liberation Sans" font-size="15" font-weight="bold" fill="#000" fill-opacity="0.085">LEADVENTURE</text>

<g font-family="Liberation Sans" fill="#111" text-anchor="middle">
<text x="543.7 549.7 555.7" y="109.0" font-size="9.6" font-weight="bold">130</text>
<text x="584.8 590.8 596.8 602.8 608.8" y="126.1" font-size="9.6" font-weight="bold">16126</text>
<text x="606.5 612.5 618.5 624.5 630.5" y="116.2" font-size="9.6" font-weight="bold">13183</text>
<text x="631.5 637.5 643.5 649.5 655.5" y="101.9" font-size="9.6" font-weight="bold">92009</text>
<text x="672.5 678.5 684.5 690.5 696.5" y="116.2" font-size="9.6" font-weight="bold">11009</text>
<text x="711.5 717.5 723.5 729.5 735.5" y="101.6" font-size="9.6" font-weight="bold">11022</text>
<text x="753.2 759.2 765.2 771.2 777.2" y="96.1" font-size="9.6" font-weight="bold">92055</text>
<text x="778.8 784.8 790.8 796.8 802.8" y="148.6" font-size="9.6" font-weight="bold">92150</text>
<text x="448.4 454.4 460.4 466.4 472.4" y="203.3" font-size="9.6" font-weight="bold">92043</text>
<text x="503.5 509.5 515.5 521.5 527.5" y="308.1" font-size="9.6" font-weight="bold">11004</text>
<text x="608.4 614.4 620.4 626.4 632.4 638.4" y="231.0" font-size="9.6" font-weight="bold">49002A</text>
<text x="638.1 644.1 650.1 656.1 662.1" y="218.5" font-size="9.6" font-weight="bold">92036</text>
<text x="592.0 598.0 604.0 610.0 616.0" y="282.7" font-size="9.6" font-weight="bold">92036</text>
<text x="565.5 571.5 577.5 583.5 589.5" y="294.1" font-size="9.6" font-weight="bold">49002</text>
<text x="582.4 588.4 594.4 600.4 606.4" y="330.8" font-size="9.6" font-weight="bold">11008</text>
<text x="706.6 712.6 718.6 724.6 730.6" y="270.2" font-size="9.6" font-weight="bold">92049</text>
<text x="775.8 781.8 787.8 793.8 799.8 805.8" y="287.8" font-size="9.6" font-weight="bold">92049A</text>
<text x="474.5 480.5 486.5 492.5 498.5" y="383.9" font-size="9.6" font-weight="bold">49015</text>
<text x="509.7 515.7 521.7 527.7 533.7" y="375.4" font-size="9.6" font-weight="bold">11060</text>
<text x="572.6 578.6 584.6" y="382.2" font-size="9.6" font-weight="bold">601</text>
<text x="642.2 648.2 654.2 660.2 666.2 672.2" y="516.7" font-size="9.6" font-weight="bold">92043A</text>
<text x="693.4 699.4 705.4 711.4 717.4" y="526.8" font-size="9.6" font-weight="bold">49120</text>
<text x="614.3 620.3 626.3 632.3 638.3" y="593.2" font-size="9.6" font-weight="bold">92004</text>
<text x="435.6 441.6 447.6 453.6 459.6 465.6" y="585.2" font-size="9.6" font-weight="bold">92049B</text>
<text x="477.8 483.8 489.8 495.8 501.8 507.8" y="597.0" font-size="9.6" font-weight="bold">92150A</text>
<text x="726.20 734.02 741.84 749.66 757.48 765.30 773.12 780.94 788.76 796.58 804.40" y="75.6" font-size="11.2" font-weight="normal" stroke="#111" stroke-width="0.35">E0110–A013A</text>
</g>
</svg>
<div id="rows">
<div class="row" style="top:648px;background:#fff"><svg class="ni" viewBox="0 0 15 16"><path d="M0.8 2.5 V13.5 Q0.8 15.5 2.8 15.5 H12.5 Q14.3 15.5 14.3 13.5 V2.5" fill="#fff" stroke="#000" stroke-width="1"/><path d="M14.3 3 V13.8 Q14.3 15.6 12.5 15.6 H2.5" fill="none" stroke="#000" stroke-width="1.6"/><path d="M1.2 2.8 H14" stroke="#444" stroke-width="0.8"/><g fill="#000"><circle cx="2.3" cy="1.6" r="0.8"/><circle cx="4.5" cy="1.6" r="0.8"/><circle cx="6.7" cy="1.6" r="0.8"/><circle cx="8.9" cy="1.6" r="0.8"/><circle cx="11.1" cy="1.6" r="0.8"/><circle cx="13.1" cy="1.8" r="0.8"/></g><path d="M3.2 5.8h3.8M3.2 7.8h3.2M7.3 9.8h2.5" stroke="#1a1a70" stroke-width="1"/><path d="M3.3 9.8 L5.5 12.6 L12.5 4.3" fill="none" stroke="#14146e" stroke-width="1.9"/></svg><span class="rf">49002</span><span class="pt">49002-2030</span><span class="ds">GUIDE-VALVE</span><span class="qt">1</span></div>
<div class="row" style="top:666px;background:#e5e3de"><svg style="position:absolute;left:20px;top:1px" width="17" height="16" viewBox="0 0 17 16"><path d="M1 5 L6 0.5 L6 3.2 C11 3.2 15 6 15.5 15 C13.5 10 10.5 7.5 6 7.5 L6 10 Z" fill="#111"/></svg><svg class="ni" viewBox="0 0 15 16"><path d="M0.8 2.5 V13.5 Q0.8 15.5 2.8 15.5 H12.5 Q14.3 15.5 14.3 13.5 V2.5" fill="#fff" stroke="#000" stroke-width="1"/><path d="M14.3 3 V13.8 Q14.3 15.6 12.5 15.6 H2.5" fill="none" stroke="#000" stroke-width="1.6"/><path d="M1.2 2.8 H14" stroke="#444" stroke-width="0.8"/><g fill="#000"><circle cx="2.3" cy="1.6" r="0.8"/><circle cx="4.5" cy="1.6" r="0.8"/><circle cx="6.7" cy="1.6" r="0.8"/><circle cx="8.9" cy="1.6" r="0.8"/><circle cx="11.1" cy="1.6" r="0.8"/><circle cx="13.1" cy="1.8" r="0.8"/></g><path d="M3.2 5.8h3.8M3.2 7.8h3.2M7.3 9.8h2.5" stroke="#1a1a70" stroke-width="1"/><path d="M3.3 9.8 L5.5 12.6 L12.5 4.3" fill="none" stroke="#14146e" stroke-width="1.9"/></svg><span class="rf">49002A</span><span class="pt">49002-2101</span><span class="ds">GUIDE-VALVE</span><span class="qt">1</span></div>
<div class="row" style="top:684px;background:#fff"><svg class="ni" viewBox="0 0 15 16"><path d="M0.8 2.5 V13.5 Q0.8 15.5 2.8 15.5 H12.5 Q14.3 15.5 14.3 13.5 V2.5" fill="#fff" stroke="#000" stroke-width="1"/><path d="M14.3 3 V13.8 Q14.3 15.6 12.5 15.6 H2.5" fill="none" stroke="#000" stroke-width="1.6"/><path d="M1.2 2.8 H14" stroke="#444" stroke-width="0.8"/><g fill="#000"><circle cx="2.3" cy="1.6" r="0.8"/><circle cx="4.5" cy="1.6" r="0.8"/><circle cx="6.7" cy="1.6" r="0.8"/><circle cx="8.9" cy="1.6" r="0.8"/><circle cx="11.1" cy="1.6" r="0.8"/><circle cx="13.1" cy="1.8" r="0.8"/></g><path d="M3.2 5.8h3.8M3.2 7.8h3.2M7.3 9.8h2.5" stroke="#1a1a70" stroke-width="1"/><path d="M3.3 9.8 L5.5 12.6 L12.5 4.3" fill="none" stroke="#14146e" stroke-width="1.9"/></svg><span class="rf">49015</span><span class="pt">49015-6137</span><span class="ds">COVER-CRANKCASE</span><span class="qt">1</span></div>
<div class="row" style="top:702px;background:#6b9bd3;color:#0b1a33"><svg style="position:absolute;left:37px;top:2px" width="17" height="15" viewBox="0 0 17 15"><path d="M16 4.5 L11 0.5 L11 2.8 C6 2.8 1.5 6 1 14.5 C3.5 10 7 7.5 11 7.5 L11 9.5 Z" fill="#111"/></svg><svg class="ni" viewBox="0 0 15 16"><path d="M0.8 2.5 V13.5 Q0.8 15.5 2.8 15.5 H12.5 Q14.3 15.5 14.3 13.5 V2.5" fill="#fff" stroke="#000" stroke-width="1"/><path d="M14.3 3 V13.8 Q14.3 15.6 12.5 15.6 H2.5" fill="none" stroke="#000" stroke-width="1.6"/><path d="M1.2 2.8 H14" stroke="#444" stroke-width="0.8"/><g fill="#000"><circle cx="2.3" cy="1.6" r="0.8"/><circle cx="4.5" cy="1.6" r="0.8"/><circle cx="6.7" cy="1.6" r="0.8"/><circle cx="8.9" cy="1.6" r="0.8"/><circle cx="11.1" cy="1.6" r="0.8"/><circle cx="13.1" cy="1.8" r="0.8"/></g><path d="M3.2 5.8h3.8M3.2 7.8h3.2M7.3 9.8h2.5" stroke="#1a1a70" stroke-width="1"/><path d="M3.3 9.8 L5.5 12.6 L12.5 4.3" fill="none" stroke="#14146e" stroke-width="1.9"/></svg><span class="rf">49120</span><span class="pt">49120-2250</span><span class="ds">CRANKCASE-COMP</span><span class="qt">1</span></div>
<div class="row" style="top:720px;background:#fff"><svg class="ni" viewBox="0 0 15 16"><path d="M0.8 2.5 V13.5 Q0.8 15.5 2.8 15.5 H12.5 Q14.3 15.5 14.3 13.5 V2.5" fill="#fff" stroke="#000" stroke-width="1"/><path d="M14.3 3 V13.8 Q14.3 15.6 12.5 15.6 H2.5" fill="none" stroke="#000" stroke-width="1.6"/><path d="M1.2 2.8 H14" stroke="#444" stroke-width="0.8"/><g fill="#000"><circle cx="2.3" cy="1.6" r="0.8"/><circle cx="4.5" cy="1.6" r="0.8"/><circle cx="6.7" cy="1.6" r="0.8"/><circle cx="8.9" cy="1.6" r="0.8"/><circle cx="11.1" cy="1.6" r="0.8"/><circle cx="13.1" cy="1.8" r="0.8"/></g><path d="M3.2 5.8h3.8M3.2 7.8h3.2M7.3 9.8h2.5" stroke="#1a1a70" stroke-width="1"/><path d="M3.3 9.8 L5.5 12.6 L12.5 4.3" fill="none" stroke="#14146e" stroke-width="1.9"/></svg></div>
</div>
<div id="hdr"><div class="tl"></div><div class="tl2"></div>
<svg class="sa" style="left:83px" viewBox="0 0 9 10"><path d="M4.5 0.2L8.9 4.6H0.1Z M0.1 5.6H8.9L4.5 10Z" fill="#fff"/></svg>
<span class="h" style="left:131px">Ref #</span>
<svg class="sa" style="left:191px" viewBox="0 0 9 10"><path d="M4.5 0.2L8.9 4.6H0.1Z M0.1 5.6H8.9L4.5 10Z" fill="#fff"/></svg>
<span class="h" style="left:246px">Part #</span>
<svg class="sa" style="left:317px" viewBox="0 0 9 10"><path d="M4.5 0.2L8.9 4.6H0.1Z M0.1 5.6H8.9L4.5 10Z" fill="#fff"/></svg>
<svg class="cb" style="left:452px" viewBox="0 0 12 12"><rect width="12" height="12" rx="1" fill="#1a73e8"/><path d="M2.5 6.2L5 8.7L9.8 3" fill="none" stroke="#fff" stroke-width="1.8"/></svg>
<span class="h" style="left:466px">Description</span>
<svg class="sa" style="left:643px" viewBox="0 0 9 10"><path d="M4.5 0.2L8.9 4.6H0.1Z M0.1 5.6H8.9L4.5 10Z" fill="#fff"/></svg>
<svg class="cb" style="left:698px" viewBox="0 0 12 12"><rect width="12" height="12" rx="1" fill="#1a73e8"/><path d="M2.5 6.2L5 8.7L9.8 3" fill="none" stroke="#fff" stroke-width="1.8"/></svg>
<span class="h" style="left:711px">Qty</span>
<svg class="sa" style="left:768px" viewBox="0 0 9 10"><path d="M4.5 0.2L8.9 4.6H0.1Z M0.1 5.6H8.9L4.5 10Z" fill="#fff"/></svg>
<svg class="cb" style="left:850px" viewBox="0 0 12 12"><rect width="12" height="12" rx="1" fill="#1a73e8"/><path d="M2.5 6.2L5 8.7L9.8 3" fill="none" stroke="#fff" stroke-width="1.8"/></svg>
<span class="h" style="left:863px">Context Note</span>
<svg class="sa" style="left:996px" viewBox="0 0 9 10"><path d="M4.5 0.2L8.9 4.6H0.1Z M0.1 5.6H8.9L4.5 10Z" fill="#fff"/></svg>
<svg class="cb" style="left:1068px" viewBox="0 0 12 12"><rect width="12" height="12" rx="1" fill="#1a73e8"/><path d="M2.5 6.2L5 8.7L9.8 3" fill="none" stroke="#fff" stroke-width="1.8"/></svg>
<span class="h" style="left:1082px">Foot Note</span>
</div>

</body></html>
